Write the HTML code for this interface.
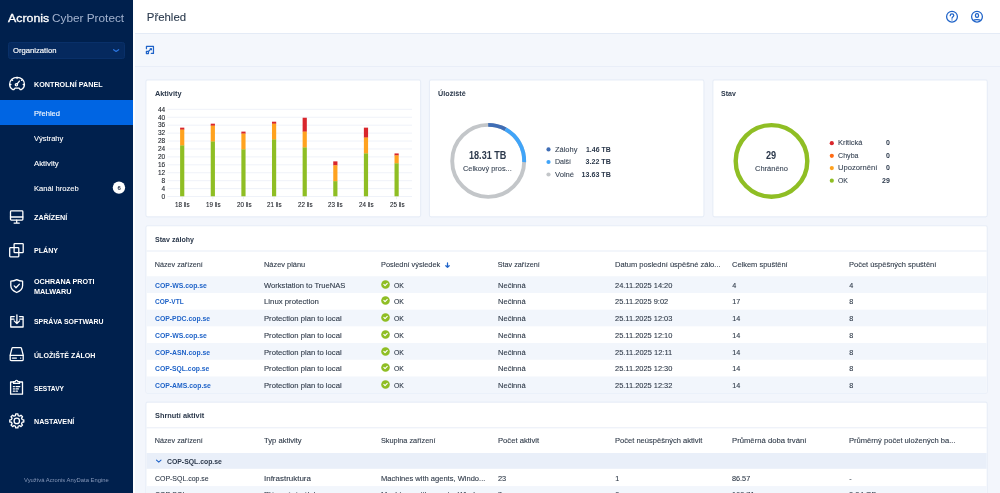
<!DOCTYPE html>
<html lang="cs">
<head>
<meta charset="utf-8">
<title>Acronis Cyber Protect</title>
<style>
*{box-sizing:border-box;margin:0;padding:0}
html,body{width:1000px;height:493px;overflow:hidden;background:#f3f6fc;font-family:"Liberation Sans",sans-serif;color:#2b3a4d}
#wrap{position:absolute;left:0;top:0;width:1000px;height:493px;will-change:transform;overflow:hidden}
.abs,.t{position:absolute;white-space:nowrap}
.t{line-height:10px;font-size:7.2px;color:#2e3948;-webkit-text-stroke:0.1px}
#side{position:absolute;left:0;top:0;width:133px;height:493px;background:#00204d}
#side .t{color:#fff}
#active{position:absolute;left:0;top:100px;width:133px;height:24.8px;background:#0065e3}
#org{position:absolute;left:8px;top:42px;width:117px;height:17px;background:#05295e;border:1px solid #093069;border-radius:2.5px}
#badge{position:absolute;left:112.75px;top:181.25px;width:12.5px;height:12.5px;border-radius:6.3px;background:#fff}
#top{position:absolute;left:133px;top:0;width:867px;height:33.6px;background:#fff;border-bottom:1px solid #e4ebf6}
#tool{position:absolute;left:133px;top:33.6px;width:867px;height:33.5px;background:#f4f7fc;border-bottom:1px solid #e9eef8}
#edge{position:absolute;left:133px;top:0;width:2.2px;height:493px;background:#fdfeff}
.card{position:absolute;background:#fff;border:1px solid #e7edf7;border-radius:2px}
.row{position:absolute;left:146.6px;width:840px}
.z{background:#f2f6fc}
</style>
</head>
<body>
<div id="wrap">
<div id="side">
<div class="t" style="left:8.10px;top:11px;font-size:11.2px;line-height:14px;transform:scaleX(1.1032);transform-origin:0 0;-webkit-text-stroke:0.3px #fff;">Acronis</div>
<div class="t" style="left:52.00px;top:11px;font-size:11.2px;line-height:14px;color:#a3b3cf;transform:scaleX(1.0545);transform-origin:0 0;-webkit-text-stroke:0;">Cyber Protect</div>
<div id="org"></div>
<div class="t" style="left:12.90px;top:45px;font-size:7.6px;line-height:11px;transform:scaleX(1.0095);transform-origin:0 0;-webkit-text-stroke:0.15px #fff;">Organization</div>
<svg class="abs" style="left:112px;top:47px" width="8" height="6" viewBox="0 0 8 6"><path d="M1.6 2.7 L4.1 4.45 L6.6 2.7" fill="none" stroke="#2a74de" stroke-width="1.25" stroke-linecap="round" stroke-linejoin="round"/></svg>
<div id="active"></div>
<div class="t" style="left:33.50px;top:79px;font-size:7.5px;line-height:11px;font-weight:bold;-webkit-text-stroke:0;transform:scaleX(0.9591);transform-origin:0 0;">KONTROLNÍ PANEL</div>
<div class="t" style="left:33.50px;top:108px;font-size:7.7px;line-height:11px;transform:scaleX(0.9796);transform-origin:0 0;">Přehled</div>
<div class="t" style="left:33.50px;top:133px;font-size:7.7px;line-height:11px;transform:scaleX(0.9782);transform-origin:0 0;">Výstrahy</div>
<div class="t" style="left:33.50px;top:158px;font-size:7.7px;line-height:11px;transform:scaleX(1.0170);transform-origin:0 0;">Aktivity</div>
<div class="t" style="left:33.50px;top:183px;font-size:7.7px;line-height:11px;transform:scaleX(0.9873);transform-origin:0 0;">Kanál hrozeb</div>
<svg class="abs" style="left:110px;top:179px" width="18" height="18" viewBox="110 179 18 18"><circle cx="118.95" cy="187.6" r="6.2" fill="#fff"/></svg>
<div class="t" style="left:117.48px;top:184px;font-size:6.0px;line-height:8px;font-weight:bold;-webkit-text-stroke:0;color:#1b2a44;">6</div>
<div class="t" style="left:33.50px;top:212px;font-size:7.5px;line-height:11px;font-weight:bold;-webkit-text-stroke:0;transform:scaleX(0.9629);transform-origin:0 0;">ZAŘÍZENÍ</div>
<div class="t" style="left:33.50px;top:245px;font-size:7.5px;line-height:11px;font-weight:bold;-webkit-text-stroke:0;transform:scaleX(0.9442);transform-origin:0 0;">PLÁNY</div>
<div class="t" style="left:33.50px;top:276px;font-size:7.5px;line-height:11px;font-weight:bold;-webkit-text-stroke:0;transform:scaleX(0.9595);transform-origin:0 0;">OCHRANA PROTI</div>
<div class="t" style="left:33.50px;top:286px;font-size:7.5px;line-height:11px;font-weight:bold;-webkit-text-stroke:0;transform:scaleX(0.9704);transform-origin:0 0;">MALWARU</div>
<div class="t" style="left:33.50px;top:316px;font-size:7.5px;line-height:11px;font-weight:bold;-webkit-text-stroke:0;transform:scaleX(0.9229);transform-origin:0 0;">SPRÁVA SOFTWARU</div>
<div class="t" style="left:33.50px;top:350px;font-size:7.5px;line-height:11px;font-weight:bold;-webkit-text-stroke:0;transform:scaleX(0.9462);transform-origin:0 0;">ÚLOŽIŠTĚ ZÁLOH</div>
<div class="t" style="left:33.50px;top:383px;font-size:7.5px;line-height:11px;font-weight:bold;-webkit-text-stroke:0;transform:scaleX(0.8850);transform-origin:0 0;">SESTAVY</div>
<div class="t" style="left:33.50px;top:416px;font-size:7.5px;line-height:11px;font-weight:bold;-webkit-text-stroke:0;transform:scaleX(0.9544);transform-origin:0 0;">NASTAVENÍ</div>
<div class="t" style="left:23.90px;top:476px;font-size:5.9px;line-height:8px;color:#8597b8;transform:scaleX(0.9894);transform-origin:0 0;-webkit-text-stroke:0;">Využívá Acronis AnyData Engine</div>
<svg class="abs" style="left:8px;top:75px" width="18" height="17" viewBox="0 0 18 17"><path d="M4.6 14.5 C2.5 13.5 1.65 11.5 1.65 9.3 C1.65 5.2 4.9 2.3 9.05 2.3 C13.2 2.3 16.45 5.2 16.45 9.3 C16.45 11.5 15.6 13.5 13.5 14.5 L12 14.5 L11.1 13.2 L7 13.2 L6.1 14.5 Z" stroke="#fff" fill="none" stroke-width="1.3" stroke-linecap="round" stroke-linejoin="round"/><circle cx="8.4" cy="9.7" r="1.15" stroke="#fff" fill="none" stroke-width="1.3" stroke-linecap="round" stroke-linejoin="round" stroke-width="1.1"/><path d="M9.2 8.8 L11.4 6.1" stroke="#fff" fill="none" stroke-width="1.3" stroke-linecap="round" stroke-linejoin="round" stroke-width="1.2"/><path d="M1.8 9.5 H2.9 M16.3 9.5 H15.2 M9.05 2.5 V3.6 M3.9 4.7 L4.6 5.4 M14.2 4.7 L13.5 5.4" stroke="#fff" fill="none" stroke-width="1.3" stroke-linecap="round" stroke-linejoin="round" stroke-width="0.9"/></svg>
<svg class="abs" style="left:8px;top:208px" width="18" height="18" viewBox="0 0 18 18"><rect x="2.5" y="2.95" width="12.35" height="9.1" rx="0.8" stroke="#fff" fill="none" stroke-width="1.3" stroke-linecap="round" stroke-linejoin="round"/><path d="M2.5 9 H14.85 M8.7 12.1 V14.7 M6.1 15.1 H11.3" stroke="#fff" fill="none" stroke-width="1.3" stroke-linecap="round" stroke-linejoin="round"/></svg>
<svg class="abs" style="left:8px;top:241px" width="18" height="18" viewBox="0 0 18 18"><rect x="6.1" y="2.6" width="9.1" height="9.1" rx="0.7" stroke="#fff" fill="none" stroke-width="1.3" stroke-linecap="round" stroke-linejoin="round" stroke-width="1.25"/><rect x="1.7" y="6.7" width="9.1" height="9.1" rx="0.7" stroke="#fff" fill="none" stroke-width="1.3" stroke-linecap="round" stroke-linejoin="round" stroke-width="1.25"/></svg>
<svg class="abs" style="left:8px;top:277px" width="18" height="18" viewBox="0 0 18 18"><path d="M8.7 2.6 C10.6 3.6 12.5 4.1 14.6 4.2 V8.6 C14.6 12 12.1 14.2 8.7 15.5 C5.3 14.2 2.8 12 2.8 8.6 V4.2 C4.9 4.1 6.8 3.6 8.7 2.6 Z" stroke="#fff" fill="none" stroke-width="1.3" stroke-linecap="round" stroke-linejoin="round"/><path d="M6.2 8.9 L8 10.7 L11.4 7.1" stroke="#fff" fill="none" stroke-width="1.3" stroke-linecap="round" stroke-linejoin="round"/></svg>
<svg class="abs" style="left:8px;top:312px" width="18" height="18" viewBox="0 0 18 18"><path d="M6.3 4.6 H2.75 V15 H15.1 V4.6 H11.5" stroke="#fff" fill="none" stroke-width="1.3" stroke-linecap="round" stroke-linejoin="round" stroke-width="1.2"/><path d="M8.9 2.8 V11.4 M6.2 8.9 L8.9 11.6 L11.6 8.9" stroke="#fff" fill="none" stroke-width="1.3" stroke-linecap="round" stroke-linejoin="round" stroke-width="1.2"/><path d="M3.2 7.2 H6 M11.8 7.2 H14.7" stroke="#fff" fill="none" stroke-width="1.3" stroke-linecap="round" stroke-linejoin="round" stroke-width="0.8"/></svg>
<svg class="abs" style="left:8px;top:345px" width="18" height="18" viewBox="0 0 18 18"><path d="M4.8 2.6 H12.6 Q13.2 2.6 13.4 3.2 L15.2 10.2 V14.4 Q15.2 15.6 14 15.6 H3.4 Q2.2 15.6 2.2 14.4 V10.2 L4 3.2 Q4.2 2.6 4.8 2.6 Z" stroke="#fff" fill="none" stroke-width="1.3" stroke-linecap="round" stroke-linejoin="round"/><path d="M2.4 10.4 H15" stroke="#fff" fill="none" stroke-width="1.3" stroke-linecap="round" stroke-linejoin="round"/><path d="M4.4 13.1 H8.4" stroke="#fff" fill="none" stroke-width="1.3" stroke-linecap="round" stroke-linejoin="round" stroke-width="1.5"/><circle cx="12.7" cy="13.1" r="0.7" fill="#fff" stroke="none"/></svg>
<svg class="abs" style="left:8px;top:378px" width="18" height="18" viewBox="0 0 18 18"><path d="M5.6 4 H2.6 V16.2 H14.5 V4 H11.5" stroke="#fff" fill="none" stroke-width="1.3" stroke-linecap="round" stroke-linejoin="round"/><path d="M5.6 5.4 V3.6 H7.2 Q7.4 2.4 8.55 2.4 Q9.7 2.4 9.9 3.6 H11.5 V5.4 Z" stroke="#fff" fill="none" stroke-width="1.3" stroke-linecap="round" stroke-linejoin="round" stroke-width="1.1"/><path d="M5.4 8.6 H6.4 M8 8.6 H11.8 M5.4 10.9 H6.4 M8 10.9 H10.4 M5.4 13.2 H6.4 M8 13.2 H9.4" stroke="#fff" fill="none" stroke-width="1.3" stroke-linecap="round" stroke-linejoin="round" stroke-width="1.1"/></svg>
<svg class="abs" style="left:8px;top:412px" width="18" height="18" viewBox="0 0 18 18"><path d="M15.81 7.79 L15.81 10.01 L14.14 10.23 L13.51 11.74 L14.54 13.07 L12.97 14.64 L11.64 13.61 L10.13 14.24 L9.91 15.91 L7.69 15.91 L7.47 14.24 L5.96 13.61 L4.63 14.64 L3.06 13.07 L4.09 11.74 L3.46 10.23 L1.79 10.01 L1.79 7.79 L3.46 7.57 L4.09 6.06 L3.06 4.73 L4.63 3.16 L5.96 4.19 L7.47 3.56 L7.69 1.89 L9.91 1.89 L10.13 3.56 L11.64 4.19 L12.97 3.16 L14.54 4.73 L13.51 6.06 L14.14 7.57 Z" stroke="#fff" fill="none" stroke-width="1.3" stroke-linecap="round" stroke-linejoin="round" stroke-width="1.25"/><circle cx="8.8" cy="8.9" r="2.7" stroke="#fff" fill="none" stroke-width="1.3" stroke-linecap="round" stroke-linejoin="round" stroke-width="1.25"/></svg>
</div>
<div id="top"></div><div id="tool"></div><div id="edge"></div>
<div class="t" style="left:146.80px;top:10px;font-size:11.4px;line-height:14px;color:#2b3a4d;">Přehled</div>
<svg class="abs" style="left:945px;top:10px" width="14" height="14" viewBox="0 0 14 14"><circle cx="7" cy="6.7" r="5.4" stroke="#1f63c8" fill="none" stroke-width="1.25" stroke-linecap="round" stroke-linejoin="round"/><path d="M5.2 5.7 C5.2 4.5 6 3.9 7 3.9 C8.1 3.9 8.8 4.6 8.8 5.5 C8.8 6.7 7 6.7 7 8.2" stroke="#1f63c8" fill="none" stroke-width="1.25" stroke-linecap="round" stroke-linejoin="round" stroke-width="1.15"/><circle cx="7" cy="9.9" r="0.65" fill="#1f63c8"/></svg>
<svg class="abs" style="left:970px;top:10px" width="14" height="14" viewBox="0 0 14 14"><circle cx="7" cy="6.7" r="5.4" stroke="#1f63c8" fill="none" stroke-width="1.25" stroke-linecap="round" stroke-linejoin="round"/><rect x="5.5" y="3.6" width="3" height="3.8" rx="1.4" stroke="#1f63c8" fill="none" stroke-width="1.25" stroke-linecap="round" stroke-linejoin="round"/><path d="M3.4 10.4 C4.6 9.2 9.4 9.2 10.6 10.4" stroke="#1f63c8" fill="none" stroke-width="1.25" stroke-linecap="round" stroke-linejoin="round"/></svg>
<svg class="abs" style="left:145px;top:45px" width="10" height="10" viewBox="0 0 10 10"><path d="M1.45 3.7 V1.45 H8.45 V8.45 H6.3" stroke="#1f63c8" fill="none" stroke-width="1.25" stroke-linecap="round" stroke-linejoin="round" stroke-width="1.3" stroke-linecap="butt" stroke-linejoin="miter"/><rect x="1.4" y="6.45" width="2.05" height="2.05" stroke="#1f63c8" fill="none" stroke-width="1.25" stroke-linecap="round" stroke-linejoin="round" stroke-width="1.2" stroke-linejoin="miter"/><path d="M3.9 6 L6 3.9" stroke="#1f63c8" fill="none" stroke-width="1.25" stroke-linecap="round" stroke-linejoin="round" stroke-width="1.1"/><path d="M4.3 3.15 H7 V5.85 Z" fill="#1f63c8" stroke="none"/></svg>
<svg class="abs" style="left:0;top:0" width="1000" height="493" viewBox="0 0 1000 493">
<rect x="145.9" y="79.85" width="274.75" height="137.05" rx="1.8" fill="#fff" stroke="#e7edf7" stroke-width="1.1"/>
<rect x="429.4" y="79.85" width="274.55" height="137.05" rx="1.8" fill="#fff" stroke="#e7edf7" stroke-width="1.1"/>
<rect x="712.85" y="79.85" width="274.45" height="137.05" rx="1.8" fill="#fff" stroke="#e7edf7" stroke-width="1.1"/>
<rect x="145.9" y="225.75" width="841.35" height="167.45" rx="1.8" fill="#fff" stroke="#e7edf7" stroke-width="1.1"/>
<rect x="145.9" y="402.1" width="841.35" height="120" rx="1.8" fill="#fff" stroke="#e7edf7" stroke-width="1.1"/>
<rect x="146.5" y="250.5" width="840.2" height="1" fill="#e8edf7"/>
<rect x="146.5" y="427.3" width="840.2" height="1" fill="#e8edf7"/>
</svg>
<div class="t" style="left:154.80px;top:88px;font-size:7.6px;line-height:11px;font-weight:bold;-webkit-text-stroke:0;color:#2b384b;transform:scaleX(0.9653);transform-origin:0 0;">Aktivity</div>
<div class="t" style="left:438.00px;top:88px;font-size:7.6px;line-height:11px;font-weight:bold;-webkit-text-stroke:0;color:#2b384b;transform:scaleX(0.9506);transform-origin:0 0;">Úložiště</div>
<div class="t" style="left:721.40px;top:88px;font-size:7.6px;line-height:11px;font-weight:bold;-webkit-text-stroke:0;color:#2b384b;transform:scaleX(0.9219);transform-origin:0 0;">Stav</div>
<svg class="abs" style="left:0;top:0" width="1000" height="493" viewBox="0 0 1000 493">
<rect x="167.4" y="196.05" width="244.6" height="1" fill="#eff2f9"/>
<rect x="167.4" y="188.12" width="244.6" height="1" fill="#eff2f9"/>
<rect x="167.4" y="180.19" width="244.6" height="1" fill="#eff2f9"/>
<rect x="167.4" y="172.25" width="244.6" height="1" fill="#eff2f9"/>
<rect x="167.4" y="164.32" width="244.6" height="1" fill="#eff2f9"/>
<rect x="167.4" y="156.39" width="244.6" height="1" fill="#eff2f9"/>
<rect x="167.4" y="148.46" width="244.6" height="1" fill="#eff2f9"/>
<rect x="167.4" y="140.53" width="244.6" height="1" fill="#eff2f9"/>
<rect x="167.4" y="132.60" width="244.6" height="1" fill="#eff2f9"/>
<rect x="167.4" y="124.66" width="244.6" height="1" fill="#eff2f9"/>
<rect x="167.4" y="116.73" width="244.6" height="1" fill="#eff2f9"/>
<rect x="167.4" y="108.80" width="244.6" height="1" fill="#eff2f9"/>
<rect x="181.80" y="197.15" width="0.8" height="2" fill="#e6eaf2"/>
<rect x="180.10" y="127.65" width="4.2" height="2.18" fill="#d9262c"/>
<rect x="180.10" y="129.63" width="4.2" height="16.06" fill="#ffa21f"/>
<rect x="180.10" y="145.49" width="4.2" height="50.81" fill="#8fbe24"/>
<rect x="212.43" y="197.15" width="0.8" height="2" fill="#e6eaf2"/>
<rect x="210.73" y="123.68" width="4.2" height="2.18" fill="#d9262c"/>
<rect x="210.73" y="125.66" width="4.2" height="16.06" fill="#ffa21f"/>
<rect x="210.73" y="141.53" width="4.2" height="54.77" fill="#8fbe24"/>
<rect x="243.06" y="197.15" width="0.8" height="2" fill="#e6eaf2"/>
<rect x="241.36" y="131.61" width="4.2" height="2.18" fill="#d9262c"/>
<rect x="241.36" y="133.60" width="4.2" height="16.06" fill="#ffa21f"/>
<rect x="241.36" y="149.46" width="4.2" height="46.84" fill="#8fbe24"/>
<rect x="273.69" y="197.15" width="0.8" height="2" fill="#e6eaf2"/>
<rect x="271.99" y="121.70" width="4.2" height="2.18" fill="#d9262c"/>
<rect x="271.99" y="123.68" width="4.2" height="16.06" fill="#ffa21f"/>
<rect x="271.99" y="139.54" width="4.2" height="56.76" fill="#8fbe24"/>
<rect x="304.32" y="197.15" width="0.8" height="2" fill="#e6eaf2"/>
<rect x="302.62" y="117.73" width="4.2" height="14.08" fill="#d9262c"/>
<rect x="302.62" y="131.61" width="4.2" height="16.06" fill="#ffa21f"/>
<rect x="302.62" y="147.48" width="4.2" height="48.82" fill="#8fbe24"/>
<rect x="334.95" y="197.15" width="0.8" height="2" fill="#e6eaf2"/>
<rect x="333.25" y="161.36" width="4.2" height="4.17" fill="#d9262c"/>
<rect x="333.25" y="165.32" width="4.2" height="16.06" fill="#ffa21f"/>
<rect x="333.25" y="181.19" width="4.2" height="15.11" fill="#8fbe24"/>
<rect x="365.58" y="197.15" width="0.8" height="2" fill="#e6eaf2"/>
<rect x="363.88" y="127.65" width="4.2" height="10.11" fill="#d9262c"/>
<rect x="363.88" y="137.56" width="4.2" height="16.06" fill="#ffa21f"/>
<rect x="363.88" y="153.43" width="4.2" height="42.88" fill="#8fbe24"/>
<rect x="396.21" y="197.15" width="0.8" height="2" fill="#e6eaf2"/>
<rect x="394.51" y="153.43" width="4.2" height="2.18" fill="#d9262c"/>
<rect x="394.51" y="155.41" width="4.2" height="8.13" fill="#ffa21f"/>
<rect x="394.51" y="163.34" width="4.2" height="32.96" fill="#8fbe24"/>
</svg>
<div class="t" style="left:161.58px;top:192px;font-size:6.5px;line-height:9px;color:#23272e;">0</div>
<div class="t" style="left:161.58px;top:184px;font-size:6.5px;line-height:9px;color:#23272e;">4</div>
<div class="t" style="left:161.58px;top:176px;font-size:6.5px;line-height:9px;color:#23272e;">8</div>
<div class="t" style="left:157.97px;top:168px;font-size:6.5px;line-height:9px;color:#23272e;">12</div>
<div class="t" style="left:157.97px;top:160px;font-size:6.5px;line-height:9px;color:#23272e;">16</div>
<div class="t" style="left:157.97px;top:152px;font-size:6.5px;line-height:9px;color:#23272e;">20</div>
<div class="t" style="left:157.97px;top:144px;font-size:6.5px;line-height:9px;color:#23272e;">24</div>
<div class="t" style="left:157.97px;top:136px;font-size:6.5px;line-height:9px;color:#23272e;">28</div>
<div class="t" style="left:157.97px;top:128px;font-size:6.5px;line-height:9px;color:#23272e;">32</div>
<div class="t" style="left:157.97px;top:120px;font-size:6.5px;line-height:9px;color:#23272e;">36</div>
<div class="t" style="left:157.97px;top:113px;font-size:6.5px;line-height:9px;color:#23272e;">40</div>
<div class="t" style="left:157.97px;top:105px;font-size:6.5px;line-height:9px;color:#23272e;">44</div>
<div class="t" style="left:175.30px;top:200px;font-size:6.5px;line-height:9px;color:#23272e;transform:scaleX(0.9622);transform-origin:0 0;">18 lis</div>
<div class="t" style="left:205.93px;top:200px;font-size:6.5px;line-height:9px;color:#23272e;transform:scaleX(0.9622);transform-origin:0 0;">19 lis</div>
<div class="t" style="left:236.56px;top:200px;font-size:6.5px;line-height:9px;color:#23272e;transform:scaleX(0.9622);transform-origin:0 0;">20 lis</div>
<div class="t" style="left:267.19px;top:200px;font-size:6.5px;line-height:9px;color:#23272e;transform:scaleX(0.9622);transform-origin:0 0;">21 lis</div>
<div class="t" style="left:297.82px;top:200px;font-size:6.5px;line-height:9px;color:#23272e;transform:scaleX(0.9622);transform-origin:0 0;">22 lis</div>
<div class="t" style="left:328.45px;top:200px;font-size:6.5px;line-height:9px;color:#23272e;transform:scaleX(0.9622);transform-origin:0 0;">23 lis</div>
<div class="t" style="left:359.08px;top:200px;font-size:6.5px;line-height:9px;color:#23272e;transform:scaleX(0.9622);transform-origin:0 0;">24 lis</div>
<div class="t" style="left:389.71px;top:200px;font-size:6.5px;line-height:9px;color:#23272e;transform:scaleX(0.9622);transform-origin:0 0;">25 lis</div>
<svg class="abs" style="left:0;top:0" width="1000" height="493" viewBox="0 0 1000 493">
<circle cx="488.2" cy="160.9" r="36.0" fill="none" stroke="#c3c6c9" stroke-width="3.9"/>
<path d="M488.20 124.90 A36.0 36.0 0 0 1 505.49 129.32" fill="none" stroke="#3f6db5" stroke-width="3.9"/>
<path d="M505.49 129.32 A36.0 36.0 0 0 1 524.18 162.17" fill="none" stroke="#40a4f8" stroke-width="3.9"/>
<circle cx="771.5" cy="160.9" r="35.8" fill="none" stroke="#8fbe24" stroke-width="4.4"/>
<circle cx="548.5" cy="149.4" r="2.1" fill="#3f6db5"/>
<circle cx="548.5" cy="162.0" r="2.1" fill="#40a4f8"/>
<circle cx="548.5" cy="174.5" r="2.1" fill="#c3c6c9"/>
<circle cx="831.8" cy="143.2" r="2.1" fill="#d9262c"/>
<circle cx="831.8" cy="155.8" r="2.1" fill="#ff6a13"/>
<circle cx="831.8" cy="168.1" r="2.1" fill="#ffa21f"/>
<circle cx="831.8" cy="180.7" r="2.1" fill="#8fbe24"/>
</svg>
<div class="t" style="left:469.30px;top:149px;font-size:10.3px;line-height:13px;font-weight:bold;-webkit-text-stroke:0;color:#2b384b;transform:scaleX(0.8828);transform-origin:0 0;">18.31 TB</div>
<div class="t" style="left:463.20px;top:163px;font-size:7.2px;line-height:11px;color:#3a4656;transform:scaleX(1.0249);transform-origin:0 0;">Celkový pros...</div>
<div class="t" style="left:766.20px;top:149px;font-size:10.3px;line-height:13px;font-weight:bold;-webkit-text-stroke:0;color:#2b384b;transform:scaleX(0.8903);transform-origin:0 0;">29</div>
<div class="t" style="left:754.80px;top:163px;font-size:7.2px;line-height:11px;color:#3a4656;transform:scaleX(1.0435);transform-origin:0 0;">Chráněno</div>
<div class="t" style="left:554.90px;top:144px;font-size:7.2px;line-height:11px;color:#3a4656;transform:scaleX(1.0365);transform-origin:0 0;">Zálohy</div>
<div class="t" style="left:586.10px;top:145px;font-size:7.1px;line-height:10px;font-weight:bold;-webkit-text-stroke:0;color:#2b384b;transform:scaleX(0.9780);transform-origin:0 0;">1.46 TB</div>
<div class="t" style="left:554.90px;top:156px;font-size:7.2px;line-height:11px;color:#3a4656;transform:scaleX(0.9815);transform-origin:0 0;">Další</div>
<div class="t" style="left:585.54px;top:157px;font-size:7.1px;line-height:10px;font-weight:bold;-webkit-text-stroke:0;color:#2b384b;">3.22 TB</div>
<div class="t" style="left:554.90px;top:169px;font-size:7.2px;line-height:11px;color:#3a4656;transform:scaleX(1.0601);transform-origin:0 0;">Volné</div>
<div class="t" style="left:581.60px;top:170px;font-size:7.1px;line-height:10px;font-weight:bold;-webkit-text-stroke:0;color:#2b384b;">13.63 TB</div>
<div class="t" style="left:838.20px;top:137px;font-size:7.2px;line-height:11px;color:#3a4656;transform:scaleX(1.0380);transform-origin:0 0;">Kritická</div>
<div class="t" style="left:886.20px;top:138px;font-size:7.1px;line-height:10px;font-weight:bold;-webkit-text-stroke:0;color:#2b384b;transform:scaleX(0.9877);transform-origin:0 0;">0</div>
<div class="t" style="left:838.20px;top:150px;font-size:7.2px;line-height:11px;color:#3a4656;transform:scaleX(0.9898);transform-origin:0 0;">Chyba</div>
<div class="t" style="left:886.20px;top:151px;font-size:7.1px;line-height:10px;font-weight:bold;-webkit-text-stroke:0;color:#2b384b;transform:scaleX(0.9877);transform-origin:0 0;">0</div>
<div class="t" style="left:838.20px;top:162px;font-size:7.2px;line-height:11px;color:#3a4656;transform:scaleX(1.0585);transform-origin:0 0;">Upozornění</div>
<div class="t" style="left:886.20px;top:163px;font-size:7.1px;line-height:10px;font-weight:bold;-webkit-text-stroke:0;color:#2b384b;transform:scaleX(0.9877);transform-origin:0 0;">0</div>
<div class="t" style="left:838.20px;top:175px;font-size:7.2px;line-height:11px;color:#3a4656;transform:scaleX(0.9613);transform-origin:0 0;">OK</div>
<div class="t" style="left:882.30px;top:176px;font-size:7.1px;line-height:10px;font-weight:bold;-webkit-text-stroke:0;color:#2b384b;transform:scaleX(0.9877);transform-origin:0 0;">29</div>
<div class="t" style="left:155.00px;top:234px;font-size:7.6px;line-height:11px;font-weight:bold;-webkit-text-stroke:0;color:#2b384b;transform:scaleX(0.9327);transform-origin:0 0;">Stav zálohy</div>
<div class="t" style="left:154.80px;top:259px;font-size:7.2px;line-height:11px;">Název zařízení</div>
<div class="t" style="left:263.70px;top:259px;font-size:7.2px;line-height:11px;transform:scaleX(1.0306);transform-origin:0 0;">Název plánu</div>
<div class="t" style="left:381.00px;top:259px;font-size:7.2px;line-height:11px;transform:scaleX(1.0210);transform-origin:0 0;">Poslední výsledek</div>
<div class="t" style="left:497.80px;top:259px;font-size:7.2px;line-height:11px;">Stav zařízení</div>
<div class="t" style="left:615.20px;top:259px;font-size:7.2px;line-height:11px;transform:scaleX(1.0485);transform-origin:0 0;">Datum poslední úspěšné zálo...</div>
<div class="t" style="left:732.20px;top:259px;font-size:7.2px;line-height:11px;transform:scaleX(1.0396);transform-origin:0 0;">Celkem spuštění</div>
<div class="t" style="left:849.20px;top:259px;font-size:7.2px;line-height:11px;transform:scaleX(1.0410);transform-origin:0 0;">Počet úspěšných spuštění</div>
<svg class="abs" style="left:444.1px;top:260.9px" width="7" height="8" viewBox="0 0 7 8"><path d="M3.5 1.9 V6.3 M1.8 4.7 L3.5 6.4 L5.2 4.7" fill="none" stroke="#1f63c8" stroke-width="1.25" stroke-linecap="round" stroke-linejoin="round"/></svg>
<svg class="abs" style="left:146px;top:276px" width="842" height="19" viewBox="146 276 842 19"><rect x="146.6" y="276.25" width="840" height="16.70" fill="#f2f6fc"/></svg>
<div class="t" style="left:154.80px;top:280px;font-size:7.2px;line-height:11px;font-weight:bold;-webkit-text-stroke:0;color:#1f63c8;transform:scaleX(0.9557);transform-origin:0 0;">COP-WS.cop.se</div>
<div class="t" style="left:263.70px;top:280px;font-size:7.2px;line-height:11px;transform:scaleX(1.0571);transform-origin:0 0;">Workstation to TrueNAS</div>
<svg class="abs" style="left:380.85px;top:280.45px" width="9" height="9" viewBox="0 0 9 9"><circle cx="4.5" cy="4.5" r="4.3" fill="#8fbe24"/><path d="M2.85 4.35 L4.05 5.6 L6.25 3.3" fill="none" stroke="#fff" stroke-width="1.15" stroke-linecap="round" stroke-linejoin="round"/></svg>
<div class="t" style="left:393.75px;top:280px;font-size:7.2px;line-height:11px;transform:scaleX(0.9613);transform-origin:0 0;">OK</div>
<div class="t" style="left:497.80px;top:280px;font-size:7.2px;line-height:11px;transform:scaleX(1.0505);transform-origin:0 0;">Nečinná</div>
<div class="t" style="left:615.20px;top:280px;font-size:7.2px;line-height:11px;transform:scaleX(1.0357);transform-origin:0 0;">24.11.2025 14:20</div>
<div class="t" style="left:732.20px;top:280px;font-size:7.2px;line-height:11px;">4</div>
<div class="t" style="left:849.20px;top:280px;font-size:7.2px;line-height:11px;">4</div>
<div class="t" style="left:154.80px;top:296px;font-size:7.2px;line-height:11px;font-weight:bold;-webkit-text-stroke:0;color:#1f63c8;transform:scaleX(0.9098);transform-origin:0 0;">COP-VTL</div>
<div class="t" style="left:263.70px;top:296px;font-size:7.2px;line-height:11px;transform:scaleX(1.0820);transform-origin:0 0;">Linux protection</div>
<svg class="abs" style="left:380.85px;top:296.45px" width="9" height="9" viewBox="0 0 9 9"><circle cx="4.5" cy="4.5" r="4.3" fill="#8fbe24"/><path d="M2.85 4.35 L4.05 5.6 L6.25 3.3" fill="none" stroke="#fff" stroke-width="1.15" stroke-linecap="round" stroke-linejoin="round"/></svg>
<div class="t" style="left:393.75px;top:296px;font-size:7.2px;line-height:11px;transform:scaleX(0.9613);transform-origin:0 0;">OK</div>
<div class="t" style="left:497.80px;top:296px;font-size:7.2px;line-height:11px;transform:scaleX(1.0505);transform-origin:0 0;">Nečinná</div>
<div class="t" style="left:615.20px;top:296px;font-size:7.2px;line-height:11px;transform:scaleX(1.0337);transform-origin:0 0;">25.11.2025 9:02</div>
<div class="t" style="left:732.20px;top:296px;font-size:7.2px;line-height:11px;">17</div>
<div class="t" style="left:849.20px;top:296px;font-size:7.2px;line-height:11px;">8</div>
<svg class="abs" style="left:146px;top:309px" width="842" height="19" viewBox="146 309 842 19"><rect x="146.6" y="309.65" width="840" height="16.70" fill="#f2f6fc"/></svg>
<div class="t" style="left:154.80px;top:313px;font-size:7.2px;line-height:11px;font-weight:bold;-webkit-text-stroke:0;color:#1f63c8;transform:scaleX(0.9524);transform-origin:0 0;">COP-PDC.cop.se</div>
<div class="t" style="left:263.70px;top:313px;font-size:7.2px;line-height:11px;transform:scaleX(1.0673);transform-origin:0 0;">Protection plan to local</div>
<svg class="abs" style="left:380.85px;top:313.45px" width="9" height="9" viewBox="0 0 9 9"><circle cx="4.5" cy="4.5" r="4.3" fill="#8fbe24"/><path d="M2.85 4.35 L4.05 5.6 L6.25 3.3" fill="none" stroke="#fff" stroke-width="1.15" stroke-linecap="round" stroke-linejoin="round"/></svg>
<div class="t" style="left:393.75px;top:313px;font-size:7.2px;line-height:11px;transform:scaleX(0.9613);transform-origin:0 0;">OK</div>
<div class="t" style="left:497.80px;top:313px;font-size:7.2px;line-height:11px;transform:scaleX(1.0505);transform-origin:0 0;">Nečinná</div>
<div class="t" style="left:615.20px;top:313px;font-size:7.2px;line-height:11px;transform:scaleX(1.0357);transform-origin:0 0;">25.11.2025 12:03</div>
<div class="t" style="left:732.20px;top:313px;font-size:7.2px;line-height:11px;">14</div>
<div class="t" style="left:849.20px;top:313px;font-size:7.2px;line-height:11px;">8</div>
<div class="t" style="left:154.80px;top:330px;font-size:7.2px;line-height:11px;font-weight:bold;-webkit-text-stroke:0;color:#1f63c8;transform:scaleX(0.9557);transform-origin:0 0;">COP-WS.cop.se</div>
<div class="t" style="left:263.70px;top:330px;font-size:7.2px;line-height:11px;transform:scaleX(1.0673);transform-origin:0 0;">Protection plan to local</div>
<svg class="abs" style="left:380.85px;top:330.45px" width="9" height="9" viewBox="0 0 9 9"><circle cx="4.5" cy="4.5" r="4.3" fill="#8fbe24"/><path d="M2.85 4.35 L4.05 5.6 L6.25 3.3" fill="none" stroke="#fff" stroke-width="1.15" stroke-linecap="round" stroke-linejoin="round"/></svg>
<div class="t" style="left:393.75px;top:330px;font-size:7.2px;line-height:11px;transform:scaleX(0.9613);transform-origin:0 0;">OK</div>
<div class="t" style="left:497.80px;top:330px;font-size:7.2px;line-height:11px;transform:scaleX(1.0505);transform-origin:0 0;">Nečinná</div>
<div class="t" style="left:615.20px;top:330px;font-size:7.2px;line-height:11px;transform:scaleX(1.0357);transform-origin:0 0;">25.11.2025 12:10</div>
<div class="t" style="left:732.20px;top:330px;font-size:7.2px;line-height:11px;">14</div>
<div class="t" style="left:849.20px;top:330px;font-size:7.2px;line-height:11px;">8</div>
<svg class="abs" style="left:146px;top:343px" width="842" height="19" viewBox="146 343 842 19"><rect x="146.6" y="343.05" width="840" height="16.70" fill="#f2f6fc"/></svg>
<div class="t" style="left:154.80px;top:347px;font-size:7.2px;line-height:11px;font-weight:bold;-webkit-text-stroke:0;color:#1f63c8;transform:scaleX(0.9524);transform-origin:0 0;">COP-ASN.cop.se</div>
<div class="t" style="left:263.70px;top:347px;font-size:7.2px;line-height:11px;transform:scaleX(1.0673);transform-origin:0 0;">Protection plan to local</div>
<svg class="abs" style="left:380.85px;top:347.45px" width="9" height="9" viewBox="0 0 9 9"><circle cx="4.5" cy="4.5" r="4.3" fill="#8fbe24"/><path d="M2.85 4.35 L4.05 5.6 L6.25 3.3" fill="none" stroke="#fff" stroke-width="1.15" stroke-linecap="round" stroke-linejoin="round"/></svg>
<div class="t" style="left:393.75px;top:347px;font-size:7.2px;line-height:11px;transform:scaleX(0.9613);transform-origin:0 0;">OK</div>
<div class="t" style="left:497.80px;top:347px;font-size:7.2px;line-height:11px;transform:scaleX(1.0505);transform-origin:0 0;">Nečinná</div>
<div class="t" style="left:615.20px;top:347px;font-size:7.2px;line-height:11px;transform:scaleX(1.0421);transform-origin:0 0;">25.11.2025 12:11</div>
<div class="t" style="left:732.20px;top:347px;font-size:7.2px;line-height:11px;">14</div>
<div class="t" style="left:849.20px;top:347px;font-size:7.2px;line-height:11px;">8</div>
<div class="t" style="left:154.80px;top:363px;font-size:7.2px;line-height:11px;font-weight:bold;-webkit-text-stroke:0;color:#1f63c8;transform:scaleX(0.9460);transform-origin:0 0;">COP-SQL.cop.se</div>
<div class="t" style="left:263.70px;top:363px;font-size:7.2px;line-height:11px;transform:scaleX(1.0673);transform-origin:0 0;">Protection plan to local</div>
<svg class="abs" style="left:380.85px;top:363.45px" width="9" height="9" viewBox="0 0 9 9"><circle cx="4.5" cy="4.5" r="4.3" fill="#8fbe24"/><path d="M2.85 4.35 L4.05 5.6 L6.25 3.3" fill="none" stroke="#fff" stroke-width="1.15" stroke-linecap="round" stroke-linejoin="round"/></svg>
<div class="t" style="left:393.75px;top:363px;font-size:7.2px;line-height:11px;transform:scaleX(0.9613);transform-origin:0 0;">OK</div>
<div class="t" style="left:497.80px;top:363px;font-size:7.2px;line-height:11px;transform:scaleX(1.0505);transform-origin:0 0;">Nečinná</div>
<div class="t" style="left:615.20px;top:363px;font-size:7.2px;line-height:11px;transform:scaleX(1.0357);transform-origin:0 0;">25.11.2025 12:30</div>
<div class="t" style="left:732.20px;top:363px;font-size:7.2px;line-height:11px;">14</div>
<div class="t" style="left:849.20px;top:363px;font-size:7.2px;line-height:11px;">8</div>
<svg class="abs" style="left:146px;top:376px" width="842" height="19" viewBox="146 376 842 19"><rect x="146.6" y="376.45" width="840" height="16.70" fill="#f2f6fc"/></svg>
<div class="t" style="left:154.80px;top:380px;font-size:7.2px;line-height:11px;font-weight:bold;-webkit-text-stroke:0;color:#1f63c8;transform:scaleX(0.9522);transform-origin:0 0;">COP-AMS.cop.se</div>
<div class="t" style="left:263.70px;top:380px;font-size:7.2px;line-height:11px;transform:scaleX(1.0673);transform-origin:0 0;">Protection plan to local</div>
<svg class="abs" style="left:380.85px;top:380.45px" width="9" height="9" viewBox="0 0 9 9"><circle cx="4.5" cy="4.5" r="4.3" fill="#8fbe24"/><path d="M2.85 4.35 L4.05 5.6 L6.25 3.3" fill="none" stroke="#fff" stroke-width="1.15" stroke-linecap="round" stroke-linejoin="round"/></svg>
<div class="t" style="left:393.75px;top:380px;font-size:7.2px;line-height:11px;transform:scaleX(0.9613);transform-origin:0 0;">OK</div>
<div class="t" style="left:497.80px;top:380px;font-size:7.2px;line-height:11px;transform:scaleX(1.0505);transform-origin:0 0;">Nečinná</div>
<div class="t" style="left:615.20px;top:380px;font-size:7.2px;line-height:11px;transform:scaleX(1.0357);transform-origin:0 0;">25.11.2025 12:32</div>
<div class="t" style="left:732.20px;top:380px;font-size:7.2px;line-height:11px;">14</div>
<div class="t" style="left:849.20px;top:380px;font-size:7.2px;line-height:11px;">8</div>
<div class="t" style="left:155.00px;top:410px;font-size:7.6px;line-height:11px;font-weight:bold;-webkit-text-stroke:0;color:#2b384b;transform:scaleX(0.9719);transform-origin:0 0;">Shrnutí aktivit</div>
<div class="t" style="left:154.80px;top:435px;font-size:7.2px;line-height:11px;">Název zařízení</div>
<div class="t" style="left:263.70px;top:435px;font-size:7.2px;line-height:11px;transform:scaleX(1.0601);transform-origin:0 0;">Typ aktivity</div>
<div class="t" style="left:381.00px;top:435px;font-size:7.2px;line-height:11px;transform:scaleX(1.0162);transform-origin:0 0;">Skupina zařízení</div>
<div class="t" style="left:497.80px;top:435px;font-size:7.2px;line-height:11px;transform:scaleX(1.0627);transform-origin:0 0;">Počet aktivit</div>
<div class="t" style="left:615.20px;top:435px;font-size:7.2px;line-height:11px;transform:scaleX(1.0511);transform-origin:0 0;">Počet neúspěšných aktivit</div>
<div class="t" style="left:732.20px;top:435px;font-size:7.2px;line-height:11px;transform:scaleX(1.0698);transform-origin:0 0;">Průměrná doba trvání</div>
<div class="t" style="left:849.20px;top:435px;font-size:7.2px;line-height:11px;transform:scaleX(1.0543);transform-origin:0 0;">Průměrný počet uložených ba...</div>
<svg class="abs" style="left:146px;top:452px" width="842" height="19" viewBox="146 452 842 19"><rect x="146.5" y="453" width="840.2" height="15.8" fill="#e9eff9"/></svg>
<svg class="abs" style="left:155.2px;top:458.1px" width="7.5" height="6" viewBox="0 0 7.5 6"><path d="M1.5 2.2 L3.75 4.2 L6 2.2" fill="none" stroke="#1f63c8" stroke-width="1.1" stroke-linecap="round" stroke-linejoin="round"/></svg>
<div class="t" style="left:167.00px;top:456px;font-size:7.2px;line-height:11px;font-weight:bold;-webkit-text-stroke:0;color:#2b384b;transform:scaleX(0.9547);transform-origin:0 0;">COP-SQL.cop.se</div>
<svg class="abs" style="left:146px;top:485px" width="842" height="8" viewBox="146 485 842 8"><rect x="146.5" y="486.1" width="840.2" height="8" fill="#f2f6fc"/></svg>
<div class="t" style="left:154.80px;top:473px;font-size:7.2px;line-height:11px;transform:scaleX(0.9664);transform-origin:0 0;">COP-SQL.cop.se</div>
<div class="t" style="left:263.70px;top:473px;font-size:7.2px;line-height:11px;transform:scaleX(1.1081);transform-origin:0 0;">Infrastruktura</div>
<div class="t" style="left:381.00px;top:473px;font-size:7.2px;line-height:11px;transform:scaleX(1.0487);transform-origin:0 0;">Machines with agents, Windo...</div>
<div class="t" style="left:497.80px;top:473px;font-size:7.2px;line-height:11px;transform:scaleX(1.0301);transform-origin:0 0;">23</div>
<div class="t" style="left:615.20px;top:473px;font-size:7.2px;line-height:11px;">1</div>
<div class="t" style="left:732.20px;top:473px;font-size:7.2px;line-height:11px;transform:scaleX(1.0129);transform-origin:0 0;">86.57</div>
<div class="t" style="left:849.20px;top:473px;font-size:7.2px;line-height:11px;">-</div>
<div class="t" style="left:154.80px;top:489px;font-size:7.2px;line-height:11px;transform:scaleX(0.9664);transform-origin:0 0;">COP-SQL.cop.se</div>
<div class="t" style="left:263.70px;top:489px;font-size:7.2px;line-height:11px;transform:scaleX(1.0539);transform-origin:0 0;">Plánování záloh</div>
<div class="t" style="left:381.00px;top:489px;font-size:7.2px;line-height:11px;transform:scaleX(1.0487);transform-origin:0 0;">Machines with agents, Windo...</div>
<div class="t" style="left:497.80px;top:489px;font-size:7.2px;line-height:11px;">7</div>
<div class="t" style="left:615.20px;top:489px;font-size:7.2px;line-height:11px;">0</div>
<div class="t" style="left:732.20px;top:489px;font-size:7.2px;line-height:11px;transform:scaleX(1.0217);transform-origin:0 0;">160.71</div>
<div class="t" style="left:849.20px;top:489px;font-size:7.2px;line-height:11px;transform:scaleX(1.0410);transform-origin:0 0;">0.04 GB</div>
</div>
</body>
</html>
